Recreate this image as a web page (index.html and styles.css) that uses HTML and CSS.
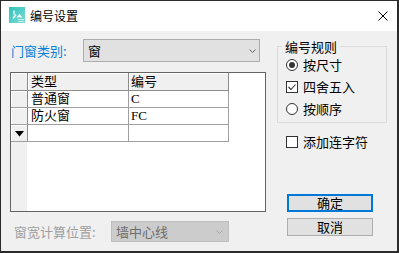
FILE: index.html
```html
<!DOCTYPE html>
<html lang="zh-CN">
<head>
  <meta charset="UTF-8" />
  <title>编号设置</title>
  <link rel="stylesheet" href="styles.css">
</head>
<body>
  <div class="window">
    <div class="titlebar">
      <svg class="app-icon" width="16" height="16" viewBox="0 0 16 16">
        <defs>
          <linearGradient id="iconGrad" x1="0" y1="0" x2="1" y2="1">
            <stop offset="0" stop-color="#2cc2ba" />
            <stop offset="1" stop-color="#7fdcd7" />
          </linearGradient>
        </defs>
        <rect width="16" height="16" fill="url(#iconGrad)" />
        <path d="M5 3.5v4M4 11.5l3-4M8.5 10.5l2-2.5 2 2.5" stroke="#fff" stroke-width="1.3" fill="none" />
        <rect x="9" y="12" width="6" height="1" fill="#c4efeb" />
        <rect x="9" y="14" width="6" height="1" fill="#c4efeb" />
      </svg>
      <span class="title">编号设置</span>
      <svg class="close" width="10" height="10" viewBox="0 0 10 10">
        <path d="M0.5 0.5l9 9M9.5 0.5l-9 9" stroke="#000" stroke-width="1" />
      </svg>
    </div>

    <div class="content">
      <div class="left">
        <div class="field-row">
          <label class="field-label">门窗类别:</label>
          <div class="combo">
            <span>窗</span>
            <svg class="arrow" width="7" height="4" viewBox="0 0 7 4">
              <path d="M0.5 0.5l3 3 3-3" stroke="#606060" fill="none" />
            </svg>
          </div>
        </div>

        <div class="grid">
          <table>
            <tr class="head">
              <th class="rh"></th>
              <th class="col-type">类型</th>
              <th class="col-code">编号</th>
            </tr>
            <tr>
              <td class="rh"></td>
              <td class="col-type">普通窗</td>
              <td class="col-code">C</td>
            </tr>
            <tr>
              <td class="rh"></td>
              <td class="col-type">防火窗</td>
              <td class="col-code">FC</td>
            </tr>
            <tr>
              <td class="rh">
                <svg class="new-mark" width="9" height="6" viewBox="0 0 9 6">
                  <polygon points="0,0 9,0 4.5,5.5" fill="#000" />
                </svg>
              </td>
              <td class="col-type"></td>
              <td class="col-code"></td>
            </tr>
          </table>
        </div>

        <div class="field-row bottom-row">
          <label class="field-label disabled">窗宽计算位置:</label>
          <div class="combo disabled">
            <span>墙中心线</span>
            <svg class="arrow" width="7" height="4" viewBox="0 0 7 4">
              <path d="M0.5 0.5l3 3 3-3" stroke="#a8a8a8" fill="none" />
            </svg>
          </div>
        </div>
      </div>

      <div class="right">
        <fieldset class="group">
          <legend>编号规则</legend>
          <div class="option"><span class="radio checked"></span>按尺寸</div>
          <div class="option">
            <span class="check">
              <svg width="10" height="10" viewBox="0 0 10 10">
                <path d="M1.5 5l2.5 2.5 4.5-5" stroke="#333" stroke-width="1.1" fill="none" />
              </svg>
            </span>四舍五入
          </div>
          <div class="option"><span class="radio"></span>按顺序</div>
        </fieldset>

        <div class="option standalone"><span class="check"></span>添加连字符</div>

        <button class="btn default">确定</button>
        <button class="btn">取消</button>
      </div>
    </div>
  </div>
</body>
</html>
```

FILE: styles.css
```css
body {
  margin: 0;
  font-family: "Noto Sans CJK SC", sans-serif;
  font-size: 13px;
  color: #000;
}

.window {
  width: 399px;
  height: 253px;
  box-sizing: border-box;
  border: 1px solid #2b2b2b;
  border-right-width: 2px;
  border-bottom-width: 2px;
  background-color: #f0f0f0;
  display: flex;
  flex-direction: column;
}

/* title bar */
.titlebar {
  height: 30px;
  flex-shrink: 0;
  background-color: #fff;
  display: flex;
  align-items: center;
  padding-left: 8px;
}

.app-icon {
  margin-bottom: 2px;
}

.title {
  margin-left: 5px;
  font-size: 12px;
  line-height: 14px;
}

.close {
  margin-left: auto;
  margin-right: 9px;
}

/* body */
.content {
  flex: 1;
  display: flex;
  padding-left: 9px;
  gap: 11px;
}

.left {
  width: 256px;
  padding-top: 8px;
}

.field-row {
  display: flex;
  align-items: center;
  height: 23px;
}

.field-label {
  width: 72px;
  padding-left: 1px;
  color: #0b7fd8;
  line-height: 16px;
}

.combo {
  width: 177px;
  height: 23px;
  box-sizing: border-box;
  border: 1px solid #adadad;
  background-color: #e1e1e1;
  display: flex;
  align-items: center;
  padding: 0 3px 0 4px;
  line-height: 16px;
}

.combo .arrow {
  margin-left: auto;
}

.bottom-row {
  margin-top: 9px;
  height: 21px;
}

.bottom-row .field-label {
  width: 97px;
  padding-left: 4px;
}

.field-label.disabled {
  color: #a0a0a0;
}

.combo.disabled {
  width: 118px;
  height: 21px;
  border-color: #bfbfbf;
  background-color: #cccccc;
  color: #6d6d6d;
  padding-right: 5px;
}

/* data grid */
.grid {
  margin-top: 10px;
  height: 140px;
  box-sizing: border-box;
  border: 1px solid #646464;
  background: linear-gradient(to right, #f0f0f0 16px, #fff 16px);
  overflow: hidden;
}

.grid table {
  border-collapse: separate;
  border-spacing: 0;
  table-layout: fixed;
  font-family: "Liberation Serif", "Noto Sans CJK SC", serif;
  font-size: 13px;
}

.grid th,
.grid td {
  padding: 0;
  height: 16px;
  line-height: 16px;
  text-align: left;
  font-weight: normal;
  border-right: 1px solid #a0a0a0;
  border-bottom: 1px solid #a0a0a0;
  background-color: #fff;
  white-space: nowrap;
}

.grid .head th {
  height: 17px;
  background-color: #f0f0f0;
  box-shadow: inset 1px 1px 0 #fff;
  border-right-color: #8c8c8c;
  border-bottom-color: #8c8c8c;
}

.grid .rh {
  width: 16px;
  background-color: #f0f0f0;
  box-shadow: inset 1px 1px 0 #fff;
  border-right-color: #8c8c8c;
  text-align: center;
}

.grid .col-type {
  width: 97px;
  padding-left: 3px;
}

.grid .col-code {
  width: 97px;
  padding-left: 2px;
}

.new-mark {
  display: block;
  margin: 1px auto 0;
}

/* right panel */
.right {
  width: 110px;
  padding-top: 8px;
}

.group {
  margin: 0;
  padding: 0 0 2px 8px;
  border: 1px solid #dcdcdc;
  min-width: 0;
}

.group legend {
  margin-left: -4px;
  padding: 0 3px;
  line-height: 15px;
}

.option {
  display: flex;
  align-items: center;
  height: 22px;
  line-height: 16px;
}

.radio,
.check {
  width: 12px;
  height: 12px;
  box-sizing: border-box;
  border: 1px solid #333;
  background-color: #fff;
  margin-right: 5px;
  display: flex;
  align-items: center;
  justify-content: center;
  flex-shrink: 0;
}

.radio {
  border-radius: 50%;
}

.radio.checked::after {
  content: "";
  width: 6px;
  height: 6px;
  border-radius: 50%;
  background-color: #333;
}

.standalone {
  margin-top: 8px;
  padding-left: 9px;
}

.btn {
  display: block;
  width: 86px;
  height: 18px;
  box-sizing: border-box;
  margin-left: 10px;
  padding: 0;
  border: 1px solid #adadad;
  background-color: #e1e1e1;
  font-family: "Noto Sans CJK SC", sans-serif;
  font-size: 13px;
  line-height: 14px;
  color: #000;
}

.btn.default {
  margin-top: 41px;
  border: 2px solid #0078d7;
}

.btn + .btn {
  margin-top: 6px;
}
```
